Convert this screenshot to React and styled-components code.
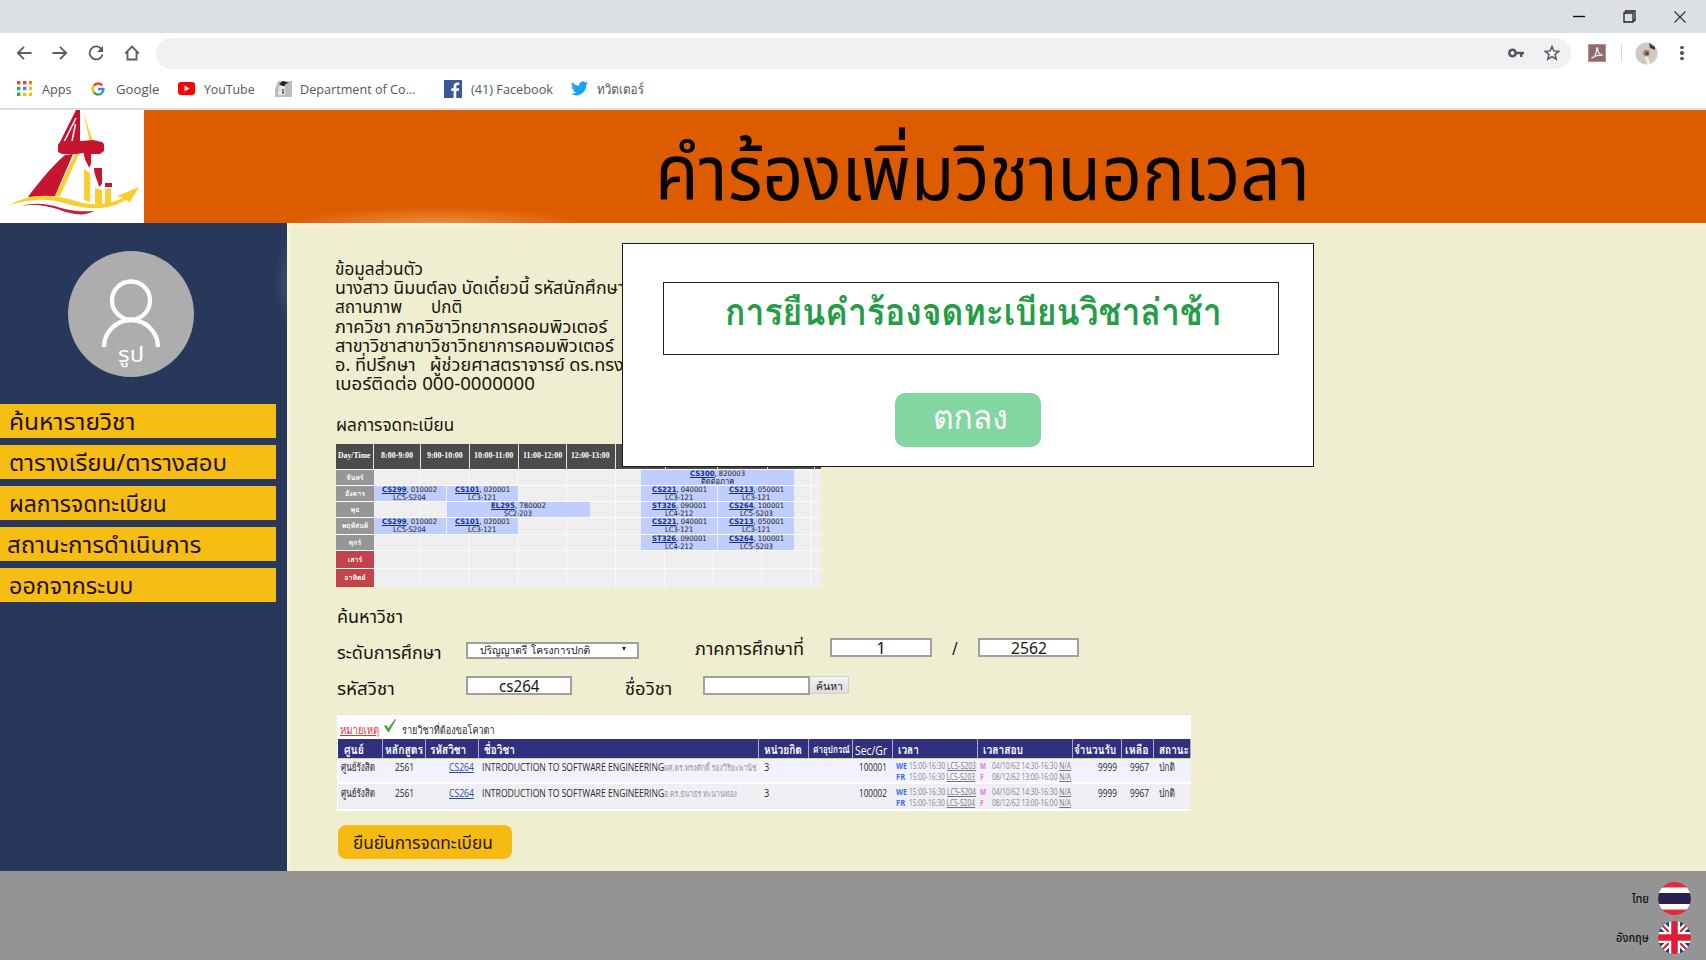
import React, { useLayoutEffect, useRef, useState } from "react";
import styled, { createGlobalStyle } from "styled-components";

const GlobalStyle = createGlobalStyle`
  * { box-sizing: border-box; }
  body { margin: 0; background: #f0eed0; overflow: hidden; }
`;
const site = `"Noto Sans Thai", "Noto Sans", sans-serif`;
const looped = `Loma, "Liberation Sans", sans-serif`;
const tahoma = `"Open Sans", Loma, sans-serif`;

/* Text that condenses or widens to fill a given measure */
const Measure = styled.span`
  display: block;
  flex: none;
  width: ${(p) => p.$w}px;
  white-space: pre;
`;
const Stretch = styled.span`
  display: inline-block;
  transform-origin: 0 50%;
`;
function Fit({ w, children }) {
  const ref = useRef(null);
  const [scale, setScale] = useState(1);
  useLayoutEffect(() => {
    if (ref.current) setScale(w / ref.current.offsetWidth);
  }, [w, children]);
  return (
    <Measure $w={w}>
      <Stretch ref={ref} style={{ transform: `scaleX(${scale})` }}>{children}</Stretch>
    </Measure>
  );
}

const Page = styled.div`
  position: relative;
  width: 1706px;
  height: 960px;
  display: flex;
  flex-direction: column;
  overflow: hidden;
  font-family: ${site};
  color: #16160e;
`;

/* ---------- browser chrome ---------- */
const TitleBar = styled.div`
  height: 33px;
  flex: none;
  background: #dcdfe4;
  display: flex;
  justify-content: flex-end;
  align-items: center;
  gap: 38px;
  padding-right: 20px;
  svg { display: block; }
`;
const Toolbar = styled.div`
  height: 40px;
  flex: none;
  background: #fff;
  display: flex;
  align-items: center;
  padding: 0 18px 0 16px;
  svg { display: block; flex: none; }
`;
const NavIcons = styled.div`
  display: flex;
  gap: 20px;
  width: 140px;
`;
const AddressBar = styled.div`
  width: 1415px;
  height: 31px;
  border-radius: 16px;
  background: #eff1f3;
  display: flex;
  align-items: center;
  justify-content: flex-end;
  gap: 20px;
  padding-right: 11px;
`;
const Extensions = styled.div`
  display: flex;
  align-items: center;
  margin-left: 17px;
`;
const Divider = styled.span`
  width: 1px;
  height: 17px;
  background: #d6d6da;
  margin: 0 13px 0 15px;
`;
const Kebab = styled.span`
  width: 4px;
  margin-left: 22px;
  display: grid;
  gap: 2px;
  i { width: 3.6px; height: 3.6px; border-radius: 50%; background: #55585c; }
`;
const Bookmarks = styled.div`
  height: 37px;
  flex: none;
  background: #fff;
  border-bottom: 2px solid #d8dde4;
  display: flex;
  align-items: center;
  padding: 0 0 4px 17px;
  font: 13.5px/20px "Open Sans", ${looped};
  color: #55565a;
`;
const Bookmark = styled.div`
  display: flex;
  align-items: center;
  gap: ${(p) => p.$gap}px;
  margin-right: ${(p) => p.$after}px;
  svg { display: block; flex: none; }
`;

/* ---------- site header ---------- */
const Header = styled.header`
  height: 113px;
  flex: none;
  display: flex;
  background:
    radial-gradient(ellipse 150px 18px at 436px 115px, rgba(240, 170, 100, .7), rgba(240, 150, 70, 0)),
    #de5c00;
`;
const Logo = styled.div`
  width: 144px;
  background: #fff;
  svg { display: block; }
`;
const Title = styled.h1`
  margin: 21px 0 0 511px;
  font-size: 77px;
  font-weight: 400;
  line-height: 91px;
  color: #080604;
`;

const Body = styled.div`
  height: 648px;
  flex: none;
  display: flex;
`;
const Sidebar = styled.aside`
  width: 287px;
  background: radial-gradient(ellipse 16px 46px at 290px 58px, #404f72, #28385a);
  display: flex;
  flex-direction: column;
  padding-top: 28px;
`;
const Avatar = styled.div`
  width: 126px;
  height: 126px;
  margin-left: 68px;
  border-radius: 50%;
  background: #adadad;
  color: #fff;
  display: flex;
  flex-direction: column;
  align-items: center;
  font-size: 22px;
  line-height: 24px;
  svg { display: block; margin-top: 28px; flex: none; }
`;
const AvatarLabel = styled.div`
  margin-top: -4px;
`;
const Menu = styled.nav`
  margin-top: 27px;
  display: flex;
  flex-direction: column;
  gap: 7px;
`;
const MenuItem = styled.a`
  width: 276px;
  height: 34px;
  background: #f6bd12;
  padding-left: ${(p) => p.$indent || 9}px;
  font-size: 23px;
  line-height: 39px;
  color: #26100a;
`;

const Content = styled.main`
  flex: 1;
  background: #f0eed0;
  box-shadow: inset 4px 3px 3px #f4f4d8;
  padding-left: 49px;
  display: flex;
  flex-direction: column;
`;
const Profile = styled.div`
  margin: 37px 0 0 -1px;
  height: 154px;
`;
const ProfileLine = styled.div`
  height: 19.2px;
  line-height: 19.2px;
  font-size: 18px;
  display: flex;
  gap: 29px;
`;
const SectionTitle = styled.h2`
  margin: 0;
  padding-left: 0;
  height: 30px;
  font-size: 18px;
  font-weight: 400;
  line-height: 23px;
`;

/* ---------- timetable ---------- */
const Timetable = styled.div`
  width: 485px;
  height: 143px;
  margin-bottom: 15px;
  background: #efefef;
  color: #222;
  font: 7.5px/8px "DejaVu Sans", ${looped};
`;
const HoursRow = styled.div`
  height: 24.5px;
  display: grid;
  grid-template-columns: 38px 46.5px 49px 49px 48px 49px 50px 52px 50px 47px 6.5px;
  background: #4b4b4b;
  color: #fff;
  font: bold 7.5px/24px "Liberation Serif", serif;
  > span { display: flex; justify-content: center; border-right: 1px solid #e4e4e4; }
`;
const DayRow = styled.div`
  height: ${(p) => p.$h}px;
  display: flex;
  border-top: 1px solid #fafafa;
  background: linear-gradient(90deg, transparent calc(100% - 1px), #fafafa 0) 36px 0 / 48.8px 100% repeat-x;
`;
const Day = styled.div`
  width: 38px;
  background: ${(p) => (p.$weekend ? "#c2434a" : "#969696")};
  color: #fff;
  font: bold 7px/${(p) => p.$h}px ${looped};
  text-align: center;
`;
const ClassBlock = styled.div`
  width: ${(p) => p.$w}px;
  margin-left: ${(p) => p.$before}px;
  background: #bfceff;
  display: flex;
  flex-direction: column;
  align-items: center;
  height: 100%;
  b { color: #12308e; text-decoration: underline; }
`;

/* ---------- search form ---------- */
const FormTitle = styled(SectionTitle)`
  padding-left: 1px;
  height: 32px;
  line-height: 31px;
`;
const FormRow = styled.div`
  height: ${(p) => p.$h}px;
  display: flex;
  align-items: flex-start;
  padding-left: 1px;
`;
const FieldLabel = styled.label`
  margin-left: ${(p) => p.$before || 0}px;
  padding-top: ${(p) => p.$drop || 0}px;
  font-size: 18px;
  line-height: 24px;
`;
const Field = styled.div`
  width: ${(p) => p.$w}px;
  height: 19px;
  margin: ${(p) => p.$drop || 0}px 0 0 ${(p) => p.$before}px;
  border: 2px solid #a0a0a0;
  background: #fff;
  display: flex;
  justify-content: center;
  font-size: 17px;
  line-height: 18px;
`;
const Select = styled(Field)`
  height: 17px;
  justify-content: space-between;
  padding: 0 11px 0 12px;
  font: 10.5px/13px ${looped};
`;
const Caret = styled.span`
  margin-top: 3px;
  border: 2.5px solid transparent;
  border-top: 4px solid #222;
  height: 0;
`;
const SearchButton = styled.div`
  width: 39px;
  height: 18px;
  margin-top: 3px;
  border: 1px solid #d2d2d6;
  border-left: 0;
  background: linear-gradient(#f2f2f2, #dcdcde);
  font: 10.5px/19px ${looped};
  padding-left: 6px;
`;

/* ---------- results ---------- */
const Results = styled.section`
  width: 854px;
  height: 96px;
  margin-left: 1px;
  background: #fff;
  font: 11px/13px ${tahoma};
  color: #2a2a2a;
`;
const Note = styled.div`
  height: 24px;
  display: flex;
  align-items: center;
  padding: 5px 0 0 3px;
  svg { display: block; margin: -7px 6px 0 5px; }
`;
const NoteWord = styled.span`
  color: #dd3038;
`;
const Columns = styled.div`
  display: grid;
  grid-template-columns: 44.5px 43.5px 52.5px 280px 50px 44px 40px 85px 95.5px 49px 32px 37px;
`;
const HeadRow = styled(Columns)`
  height: 20px;
  margin-left: 1px;
  width: 853px;
  background: #31307e;
  color: #fff;
  font: bold 12px/22px ${tahoma};
  border-bottom: 1px solid #d8dc6a;
`;
const HeadCell = styled.div`
  padding-left: ${(p) => p.$pad}px;
  font-weight: ${(p) => (p.$light ? 400 : 600)};
  font-size: ${(p) => p.$size || 12}px;
  border-right: 1px solid #aaa9cc;
  overflow: hidden;
`;
const ResultRow = styled(Columns)`
  height: ${(p) => p.$h}px;
  margin-left: 1px;
  width: 853px;
  padding-top: ${(p) => p.$top}px;
  background: ${(p) => p.$bg};
  border-bottom: 2px solid #fff;
`;
const Cell = styled.div`
  padding-left: ${(p) => p.$pad}px;
  display: flex;
`;
const CourseLink = styled.span`
  color: #27509c;
`;
const Lecturer = styled.span`
  color: #999;
  font-size: 9px;
  line-height: 15px;
`;
const Times = styled.div`
  display: grid;
  grid-template-columns: ${(p) => p.$first}px auto;
  grid-auto-rows: 10.5px;
  align-content: start;
  padding-left: ${(p) => p.$pad}px;
  font-size: 8.5px;
  line-height: 11px;
  color: #888;
  b { color: ${(p) => p.$accent}; }
  u { color: #777; }
`;
const Confirm = styled.button`
  width: 174px;
  height: 34px;
  flex: none;
  margin: 14px 0 0 2px;
  padding: 0 0 0 15px;
  border: 0;
  border-radius: 8px;
  background: #f6bb12;
  font: 18.5px/37px ${site};
  color: #2a1500;
  text-align: left;
`;

const Footer = styled.footer`
  height: 89px;
  flex: none;
  background: #949494;
  display: flex;
  flex-direction: column;
  align-items: flex-end;
  padding: 11px 15px 0 0;
  gap: 6px;
`;
const Language = styled.div`
  display: flex;
  align-items: center;
  gap: 9px;
  height: 33px;
  font-size: 13px;
  font-weight: 500;
  line-height: 16px;
  color: #111;
  svg { display: block; }
`;

/* ---------- dialog ---------- */
const Dialog = styled.div`
  position: absolute;
  left: 622px;
  top: 243px;
  width: 692px;
  height: 224px;
  background: #fff;
  border: 1px solid #1c1c1c;
  display: flex;
  flex-direction: column;
  font-family: ${looped};
`;
const Message = styled.div`
  width: 616px;
  height: 73px;
  margin: 38px 0 0 40px;
  border: 1px solid #222;
  padding-left: 61px;
  font-size: 37px;
  font-weight: 700;
  line-height: 57px;
  color: #249d47;
`;
const OkButton = styled.button`
  width: 146px;
  height: 54px;
  margin: 38px 0 0 272px;
  padding: 0 0 4px 38px;
  border: 0;
  border-radius: 10px;
  background: #82d6a0;
  color: #fff;
  font: 33px/48px ${looped};
  text-align: left;
`;

const MENU = [
  ["ค้นหารายวิชา", 127], ["ตารางเรียน/ตารางสอบ", 218], ["ผลการจดทะเบียน", 158],
  ["สถานะการดำเนินการ", 194, 7], ["ออกจากระบบ", 124],
];
const PROFILE = [
  [["ข้อมูลส่วนตัว", 88]],
  [["นางสาว นิมนต์ลง บัดเดี๋ยวนี้ รหัสนักศึกษา", 290]],
  [["สถานภาพ", 67], ["ปกติ", 31]],
  [["ภาควิชา ภาควิชาวิทยาการคอมพิวเตอร์", 272]],
  [["สาขาวิชาสาขาวิชาวิทยาการคอมพิวเตอร์", 279]],
  [["อ. ที่ปรึกษา   ผู้ช่วยศาสตราจารย์ ดร.ทรง", 289]],
  [["เบอร์ติดต่อ 000-0000000", 200]],
];
const HOURS = [
  ["Day/Time", 33], ["8:00-9:00", 32], ["9:00-10:00", 36], ["10:00-11:00", 39],
  ["11:00-12:00", 39], ["12:00-13:00", 39],
];
const DAYS = [
  ["จันทร์", 16.3, [[267, 153, "CS300", "820003", "ติดต่อภาค"]]],
  ["อังคาร", 16.3, [[0, 71.5, "CS299", "010002", "LC5-S204"], [1, 71, "CS101", "020001", "LC3-121"], [123.5, 76, "CS221", "040001", "LC3-121"], [1, 76, "CS213", "050001", "LC3-121"]]],
  ["พุธ", 16.2, [[72.5, 143.5, "EL295", "780002", "SC2-203"], [51, 76, "ST326", "090001", "LC4-212"], [1, 76, "CS264", "100001", "LC5-S203"]]],
  ["พฤหัสบดี", 16.3, [[0, 71.5, "CS299", "010002", "LC5-S204"], [1, 71, "CS101", "020001", "LC3-121"], [123.5, 76, "CS221", "040001", "LC3-121"], [1, 76, "CS213", "050001", "LC3-121"]]],
  ["ศุกร์", 16.3, [[267, 76, "ST326", "090001", "LC4-212"], [1, 76, "CS264", "100001", "LC5-S203"]]],
  ["เสาร์", 18.3, [], true],
  ["อาทิตย์", 18.6, [], true],
];
const HEAD = [
  ["ศูนย์", 20, 6], ["หลักสูตร", 38, 2], ["รหัสวิชา", 36, 4], ["ชื่อวิชา", 31, 5],
  ["หน่วยกิต", 38, 5], ["ค่าอุปกรณ์", 37, 4, 9], ["Sec/Gr", 32, 2, 13], ["เวลา", 21, 5],
  ["เวลาสอบ", 40, 5], ["จำนวนรับ", 42, 1], ["เหลือ", 24, 3], ["สถานะ", 30, 5],
];
const ROWS = [
  { h: 25, top: 1, bg: "#f1f1ff", sec: "100001", room: "LC5-S203", who: "ผศ.ดร.ทรงศักดิ์ รองวิริยะพานิช", whoW: 93 },
  { h: 27, top: 2, bg: "#eeeef3", sec: "100002", room: "LC5-S204", who: "อ.ดร.ธนาธร ทะนานทอง", whoW: 73 },
];

const Ico = ({ w = 16, h = w, vb = "0 0 16 16", children, ...rest }) => (
  <svg width={w} height={h} viewBox={vb} fill="none" {...rest}>{children}</svg>
);
const line = { stroke: "#5a5d61", strokeWidth: 1.8 };

function Chrome() {
  return (
    <>
      <TitleBar>
        <Ico w={12} vb="0 0 12 12"><path d="M0 5.500h12" stroke="#111" strokeWidth="1.400" /></Ico>
        <Ico w={13} vb="0 0 13 13"><path d="M1 3h9v9H1zM2.500 3V1H12v9.500H10" stroke="#222" strokeWidth="1.300" /></Ico>
        <Ico w={12} vb="0 0 12 12"><path d="M.5.5l11 11M11.500.5l-11 11" stroke="#333" strokeWidth="1.100" /></Ico>
      </TitleBar>
      <Toolbar>
        <NavIcons>
          <Ico><path d="M15.500 8H2M8 1.800L1.800 8 8 14.200" {...line} /></Ico>
          <Ico><path d="M.5 8H14M8 1.800L14.200 8 8 14.200" {...line} /></Ico>
          <Ico><path d="M13.600 4.300A6.500 6.500 0 1 0 14.500 9.500" {...line} /><path d="M15 1v6H9z" fill="#5a5d61" /></Ico>
          <Ico><path d="M1.200 8.500L8 1.500l6.800 7M3.500 7v7.500h9V7" {...line} /></Ico>
        </NavIcons>
        <AddressBar>
          <Ico w={16} h={10} vb="0 0 16 10"><circle cx="4.500" cy="5" r="3.200" stroke="#54575b" strokeWidth="2.600" /><path d="M7 5h9M13.200 5v4" stroke="#54575b" strokeWidth="2.400" /></Ico>
          <Ico w={16}><path d="M8 1.500l1.900 4.400 4.800.4-3.600 3.200 1.100 4.700L8 11.700l-4.200 2.500 1.100-4.700L1.300 6.300l4.800-.4z" stroke="#54575b" strokeWidth="1.500" /></Ico>
        </AddressBar>
        <Extensions>
          <Ico w={18} vb="0 0 18 18"><path d="M0 0h18v18H0z" fill="#bd8f8c" /><path d="M1 1h16v16H1z" fill="#8f6b69" /><path d="M3.500 14.200c3-1 5.200-5 5.200-9.700 0-1 1.200-1 1 .2-.4 3.300 2 6.300 5 6.600-4-.8-7.700.2-11.200 2.900z" stroke="#eee" strokeWidth="1.300" /></Ico>
          <Divider />
          <Ico w={23} vb="0 0 23 23"><circle cx="11.500" cy="11.500" r="11" fill="#cfc9c4" /><path d="M14 1l6 4v3l-5-2z" fill="#4a3238" /><circle cx="11.500" cy="11" r="3.300" fill="#a4806a" /><circle cx="12" cy="11.500" r="1.500" fill="#6b3a2c" /><path d="M11 15l3 7" stroke="#eee" strokeWidth="3" /></Ico>
          <Kebab><i /><i /><i /></Kebab>
        </Extensions>
      </Toolbar>
      <Bookmarks>
        <Bookmark $gap={10} $after={19}>
          <Ico w={15} vb="0 0 15 15">
            {["#e94335", "#e94335", "#fa7b17", "#34a853", "#4285f4", "#fbbc05", "#34a853", "#fbbc05", "#fbbc05"].map((c, i) => (
              <rect key={i} x={(i % 3) * 6} y={Math.floor(i / 3) * 5.8} width="3.400" height="3.400" fill={c} />
            ))}
          </Ico>
          <Fit w={30}>Apps</Fit>
        </Bookmark>
        <Bookmark $gap={11} $after={19}>
          <Ico w={14}>
            <path d="M13 4A6.300 6.300 0 0 0 3.200 4.200" stroke="#ea4335" strokeWidth="2.800" />
            <path d="M3.200 4.200a6.300 6.300 0 0 0 0 7.600" stroke="#fbbc05" strokeWidth="2.800" />
            <path d="M3.200 11.800a6.300 6.300 0 0 0 8.900 1.200" stroke="#34a853" strokeWidth="2.800" />
            <path d="M8 8h6.200c0 2.200-.9 4-2.300 5" stroke="#4285f4" strokeWidth="2.800" />
          </Ico>
          <Fit w={43}>Google</Fit>
        </Bookmark>
        <Bookmark $gap={9} $after={20}>
          <Ico w={17} h={13} vb="0 0 17 13"><rect width="17" height="13" rx="3" fill="#f00" /><path d="M6.500 3.500v6l5-3z" fill="#fff" /></Ico>
          <Fit w={51}>YouTube</Fit>
        </Bookmark>
        <Bookmark $gap={8} $after={28}>
          <Ico w={17} vb="0 0 17 17"><path d="M3 1h14v16H0V9z" fill="#bdbdbd" /><path d="M4 4l4-3 6 2-4 1v2H8z" fill="#222" /><path d="M4 6h6v9H3z" fill="#e6e6e6" /><path d="M8 9v5" stroke="#555" strokeWidth="1.500" /></Ico>
          <Fit w={116}>Department of Co...</Fit>
        </Bookmark>
        <Bookmark $gap={9} $after={18}>
          <Ico w={18} vb="0 0 18 18"><path d="M0 0h18v18H0z" fill="#3b5998" /><path d="M12.300 18v-7h2.400l.4-2.800h-2.800V6.500c0-.9.4-1.500 1.500-1.500h1.400V2.600c-3.400-.5-5.600.6-5.600 3.700v1.900H7.300V11h2.300v7z" fill="#fff" /></Ico>
          <Fit w={82}>(41) Facebook</Fit>
        </Bookmark>
        <Bookmark $gap={9} $after={0}>
          <Ico w={17} h={15} vb="0 0 24 20"><path d="M24 2.400a10 10 0 0 1-2.800.8A5 5 0 0 0 23.300.5a10 10 0 0 1-3.100 1.200 4.900 4.900 0 0 0-8.400 4.500A14 14 0 0 1 1.700 1a4.900 4.900 0 0 0 1.500 6.600A5 5 0 0 1 1 7v.1a4.900 4.900 0 0 0 4 4.800 5 5 0 0 1-2.300.1 4.900 4.900 0 0 0 4.600 3.400A10 10 0 0 1 0 17.500a14 14 0 0 0 21.500-12.400A10 10 0 0 0 24 2.400z" fill="#1da1f2" /></Ico>
          <Fit w={47}>ทวิตเตอร์</Fit>
        </Bookmark>
      </Bookmarks>
    </>
  );
}

const UniversityLogo = () => (
  <Ico w={144} h={113} vb="0 0 144 113">
    <path d="M76 0h4v34H59z" fill="#c4122f" />
    <path d="M76 8L64 32M75.500 14L72 31" stroke="#fff" strokeWidth="1.500" />
    <path d="M83 1l5 16 5 14-3 1z" fill="#f9cf2d" />
    <g transform="translate(0 5)">
      <path d="M58 29l5-3h18l12-1 9 2 2 2v7l-4 3H88l-4-1-8 1H62l-4-2z" fill="#c8152f" />
      <path d="M65 40l8-1-18 42-27 1c9-12 20-27 37-42z" fill="#c8152f" />
      <path d="M75 39h4L60 81h-5z" fill="#f9cf2d" />
      <path d="M84 38h7v11l-2 4c-1-5-5-7-5-15zM94 53h8v16l-3 3c-1-7-5-11-5-19zM105 68h7v4h-7z" fill="#c8152f" />
      <path d="M84 54l6 4v29l-6-2zM95 73l7 2v14h-7zM105 74h6v15h-6z" fill="#f9cf2d" />
      <path d="M9 90c18-10 37-12 60-6 22 8 38 6 54-1l-6-2 22-9-9 15-4-2c-19 11-38 10-62 3-21-6-35-3-55 2z" fill="#f9cf2d" />
      <path d="M20 91c24-6 35 1 50 4 10 2 16 1 24 1-10 6-24 3-34-1-15-5-25-6-40-4z" fill="#c4203a" />
    </g>
  </Ico>
);

export default function App() {
  return (
    <>
      <GlobalStyle />
      <Page>
        <Chrome />
        <Header>
          <Logo><UniversityLogo /></Logo>
          <Title><Fit w={655}>คำร้องเพิ่มวิชานอกเวลา</Fit></Title>
        </Header>
        <Body>
          <Sidebar>
            <Avatar>
              <Ico w={60} h={69} vb="0 0 60 69"><circle cx="30" cy="21.500" r="19" stroke="#fff" strokeWidth="4.300" /><path d="M3 68a27 27 0 0 1 54 0" stroke="#fff" strokeWidth="4.300" /></Ico>
              <AvatarLabel><Fit w={26}>รูป</Fit></AvatarLabel>
            </Avatar>
            <Menu>
              {MENU.map(([t, w, indent]) => <MenuItem key={t} $indent={indent}><Fit w={w}>{t}</Fit></MenuItem>)}
            </Menu>
          </Sidebar>
          <Content>
            <Profile>
              {PROFILE.map((parts, i) => (
                <ProfileLine key={i}>{parts.map(([t, w]) => <Fit key={t} w={w}>{t}</Fit>)}</ProfileLine>
              ))}
            </Profile>
            <SectionTitle><Fit w={118}>ผลการจดทะเบียน</Fit></SectionTitle>
            <Timetable>
              <HoursRow>
                {HOURS.map(([t, w]) => <span key={t}><Fit w={w}>{t}</Fit></span>)}
                <span /><span /><span /><span />
              </HoursRow>
              {DAYS.map(([name, h, blocks, weekend]) => (
                <DayRow key={name} $h={h}>
                  <Day $h={h} $weekend={weekend}>{name}</Day>
                  {blocks.map(([before, w, code, sec, room]) => (
                    <ClassBlock key={code} $before={before} $w={w}>
                      <Fit w={55}><b>{code}</b>, {sec}</Fit>
                      <Fit w={room.length > 7 ? 33 : 28}>{room}</Fit>
                    </ClassBlock>
                  ))}
                </DayRow>
              ))}
            </Timetable>
            <FormTitle><Fit w={66}>ค้นหาวิชา</Fit></FormTitle>
            <FormRow $h={39}>
              <FieldLabel $drop={8}><Fit w={105}>ระดับการศึกษา</Fit></FieldLabel>
              <Select $w={173} $before={24} $drop={8}><Fit w={110}>ปริญญาตรี โครงการปกติ</Fit><Caret /></Select>
              <FieldLabel $before={56} $drop={4}><Fit w={109}>ภาคการศึกษาที่</Fit></FieldLabel>
              <Field $w={102} $before={26} $drop={4}>1</Field>
              <FieldLabel $before={20} $drop={4}><Fit w={6}>/</Fit></FieldLabel>
              <Field $w={101} $before={20} $drop={4}><Fit w={36}>2562</Fit></Field>
            </FormRow>
            <FormRow $h={42}>
              <FieldLabel $drop={5}><Fit w={58}>รหัสวิชา</Fit></FieldLabel>
              <Field $w={106} $before={71} $drop={3}><Fit w={40}>cs264</Fit></Field>
              <FieldLabel $before={53} $drop={5}><Fit w={47}>ชื่อวิชา</Fit></FieldLabel>
              <Field $w={107} $before={31} $drop={3} />
              <SearchButton><Fit w={27}>ค้นหา</Fit></SearchButton>
            </FormRow>
            <Results>
              <Note>
                <NoteWord><Fit w={39}><u>หมายเหตุ</u></Fit></NoteWord>
                <Ico w={12} h={14} vb="0 0 12 14"><path d="M0 7l2-1 2.500 3L11 0l1 .5L5 13H4z" fill="#47a32d" /></Ico>
                <Fit w={93}>รายวิชาที่ต้องขอโควตา</Fit>
              </Note>
              <HeadRow>
                {HEAD.map(([t, w, pad, size]) => (
                  <HeadCell key={t} $pad={pad} $size={size} $light={t === "Sec/Gr"}><Fit w={w}>{t}</Fit></HeadCell>
                ))}
              </HeadRow>
              {ROWS.map((r) => (
                <ResultRow key={r.sec} $h={r.h} $top={r.top} $bg={r.bg}>
                  <Cell $pad={3}><Fit w={34}>ศูนย์รังสิต</Fit></Cell>
                  <Cell $pad={12}><Fit w={19}>2561</Fit></Cell>
                  <Cell $pad={23}><CourseLink><Fit w={25}><u>CS264</u></Fit></CourseLink></Cell>
                  <Cell $pad={3}>
                    <Fit w={182}>INTRODUCTION TO SOFTWARE ENGINEERING</Fit>
                    <Lecturer><Fit w={r.whoW}>{r.who}</Fit></Lecturer>
                  </Cell>
                  <Cell $pad={5}><Fit w={5}>3</Fit></Cell>
                  <Cell />
                  <Cell $pad={6}><Fit w={28}>{r.sec}</Fit></Cell>
                  <Times $pad={3} $first={13} $accent="#3e6ef0">
                    <b><Fit w={11}>WE</Fit></b><Fit w={67}>15:00-16:30 <u>{r.room}</u></Fit>
                    <b><Fit w={9}>FR</Fit></b><Fit w={66}>15:00-16:30 <u>{r.room}</u></Fit>
                  </Times>
                  <Times $pad={2} $first={12} $accent="#ea78dc">
                    <b><Fit w={6}>M</Fit></b><Fit w={79}>04/10/62 14:30-16:30 <u>N/A</u></Fit>
                    <b><Fit w={4}>F</Fit></b><Fit w={79}>08/12/62 13:00-16:00 <u>N/A</u></Fit>
                  </Times>
                  <Cell $pad={25}><Fit w={19}>9999</Fit></Cell>
                  <Cell $pad={8}><Fit w={19}>9967</Fit></Cell>
                  <Cell $pad={5}><Fit w={16}>ปกติ</Fit></Cell>
                </ResultRow>
              ))}
            </Results>
            <Confirm><Fit w={140}>ยืนยันการจดทะเบียน</Fit></Confirm>
          </Content>
        </Body>
        <Footer>
          <Language>
            <Fit w={17}>ไทย</Fit>
            <Ico w={33} vb="0 0 33 33">
              <clipPath id="round"><circle cx="16.500" cy="16.500" r="16.500" /></clipPath>
              <g clipPath="url(#round)"><path d="M0 0h33v33H0z" fill="#e8283c" /><path d="M0 5.500h33v22H0z" fill="#fff" /><path d="M0 11h33v11H0z" fill="#2a2150" /></g>
            </Ico>
          </Language>
          <Language>
            <Fit w={33}>อังกฤษ</Fit>
            <Ico w={33} vb="0 0 33 33">
              <g clipPath="url(#round)">
                <path d="M0 0h33v33H0z" fill="#1c3f80" />
                <path d="M0 0l33 33M33 0L0 33" stroke="#fff" strokeWidth="6.500" />
                <path d="M0 0l33 33M33 0L0 33" stroke="#dd1c35" strokeWidth="2" />
                <path d="M16.500 0v33M0 16.500h33" stroke="#fff" strokeWidth="11" />
                <path d="M16.500 0v33M0 16.500h33" stroke="#dd1c35" strokeWidth="6.500" />
              </g>
            </Ico>
          </Language>
        </Footer>
        <Dialog role="dialog">
          <Message><Fit w={497}>การยืนคำร้องจดทะเบียนวิชาล่าช้า</Fit></Message>
          <OkButton><Fit w={75}>ตกลง</Fit></OkButton>
        </Dialog>
      </Page>
    </>
  );
}
